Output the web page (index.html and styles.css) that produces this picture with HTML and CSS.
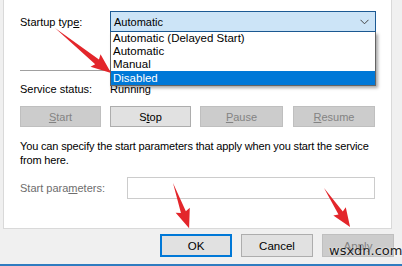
FILE: index.html
```html
<!DOCTYPE html>
<html lang="en">
  <head>
    <meta charset="UTF-8" />
    <title>Service Properties</title>
    <link rel="stylesheet" href="styles.css">
  </head>
  <body>
    <div class="sheet">
      <div class="row">
        <label class="label">Startup typ<u>e</u>:</label>
        <div class="combo">
          <span>Automatic</span>
          <svg class="chevron" width="9" height="6" viewBox="0 0 9 6"><path d="M0.5 0.8 L4.5 4.8 L8.5 0.8" fill="none" stroke="#444" stroke-width="1"/></svg>
        </div>
      </div>
      <div class="separator"></div>
      <div class="row status">
        <span class="label">Service status:</span>
        <span>Running</span>
      </div>
      <div class="row actions">
        <button class="btn disabled w81"><u>S</u>tart</button>
        <button class="btn w81">S<u>t</u>op</button>
        <button class="btn disabled w83"><u>P</u>ause</button>
        <button class="btn disabled w82"><u>R</u>esume</button>
      </div>
      <p class="hint">You can specify the start parameters that apply when you start the service<br>from here.</p>
      <div class="row params">
        <label class="label wide muted">Start para<u>m</u>eters:</label>
        <div class="field"></div>
      </div>
    </div>
    <div class="footer">
      <button class="btn big default">OK</button>
      <button class="btn big">Cancel</button>
      <button class="btn big disabled">Apply</button>
    </div>
    <div class="window-edge"></div>

    <ul class="dropdown">
      <li>Automatic (Delayed Start)</li>
      <li>Automatic</li>
      <li>Manual</li>
      <li class="selected">Disabled</li>
    </ul>

    <span class="watermark">wsxdn.com</span>

    <svg class="arrows" width="402" height="266" viewBox="0 0 402 266">
      <g fill="#e3262b">
        <polygon transform="translate(55 28) rotate(38.8)" points="0,0 54,-3 52,-8 72,0 52,8 54,3"/>
        <polygon transform="translate(173 183) rotate(70.4)" points="0,0 31,-2.6 29,-7.5 48,0 29,7.5 31,2.6"/>
        <polygon transform="translate(324 188) rotate(56.3)" points="0,0 30,-2.6 28,-7.5 47,0 28,7.5 30,2.6"/>
      </g>
    </svg>
  </body>
</html>
```

FILE: styles.css
```css
* {
  margin: 0;
  padding: 0;
  box-sizing: border-box;
}

body {
  width: 402px;
  height: 266px;
  overflow: hidden;
  background-color: #f0f0f0;
  font-family: "Liberation Sans", Arial, sans-serif;
  font-size: 11px;
  color: #000;
  position: relative;
}

u {
  text-underline-offset: 1px;
}

.sheet {
  margin-left: 3px;
  width: 389px;
  height: 229px;
  background-color: #fff;
  border-left: 1px solid #d9d9d9;
  border-right: 1px solid #d9d9d9;
  border-bottom: 1px solid #d9d9d9;
  padding: 11px 0 0 16px;
}

.row {
  display: flex;
  align-items: center;
}

.label {
  width: 90px;
}

.label.wide {
  width: 107px;
}

.muted {
  color: #6d6d6d;
}

.combo {
  width: 266px;
  height: 21px;
  background-color: #cce4f7;
  border: 1px solid #1c5a94;
  display: flex;
  align-items: center;
  justify-content: space-between;
  padding: 0 6px 0 3px;
}

.separator {
  margin-top: 38px;
  width: 356px;
  height: 1px;
  background-color: #a0a0a0;
}

.status {
  margin-top: 11px;
  height: 14px;
}

.actions {
  margin-top: 10px;
  gap: 9px;
}

.btn {
  height: 21px;
  font-family: inherit;
  font-size: 11px;
  color: #000;
  background-color: #e1e1e1;
  border: 1px solid #adadad;
}

.btn.disabled {
  background-color: #cccccc;
  border-color: #bfbfbf;
  color: #838383;
}

.w81 { width: 81px; }
.w82 { width: 82px; }
.w83 { width: 83px; margin-right: 1px; }

.hint {
  margin-top: 12px;
  line-height: 14px;
  font-size: 11px;
  white-space: nowrap;
  letter-spacing: -0.15px;
}

.params {
  margin-top: 10px;
}

.field {
  width: 248px;
  height: 22px;
  border: 1px solid #cccccc;
}

.footer {
  display: flex;
  justify-content: flex-end;
  gap: 9px;
  padding: 5px 8px 0 0;
}

.btn.big {
  width: 72px;
  height: 23px;
  font-size: 11.5px;
}

.btn.default {
  border: 2px solid #0078d7;
}

.window-edge {
  margin-top: 7px;
  height: 2px;
  background-color: #2f7cc0;
}

.dropdown {
  list-style: none;
  position: absolute;
  left: 110px;
  top: 32px;
  width: 266px;
  height: 54px;
  background-color: #fff;
  border: 1px solid #646464;
  border-top: none;
  box-shadow: 2px 2px 3px rgba(0, 0, 0, 0.35);
  font-size: 11.5px;
}

.dropdown li {
  height: 13px;
  line-height: 13px;
  padding-left: 2px;
}

.dropdown li.selected {
  height: 14px;
  line-height: 14px;
  background-color: #0078d7;
  color: #fff;
}

.watermark {
  position: absolute;
  left: 329px;
  top: 243px;
  font-family: "DejaVu Sans", sans-serif;
  font-size: 13px;
  color: #1a1a1a;
  text-shadow: 0 0 2px #fff;
}

.arrows {
  position: absolute;
  left: 0;
  top: 0;
  pointer-events: none;
}
```
